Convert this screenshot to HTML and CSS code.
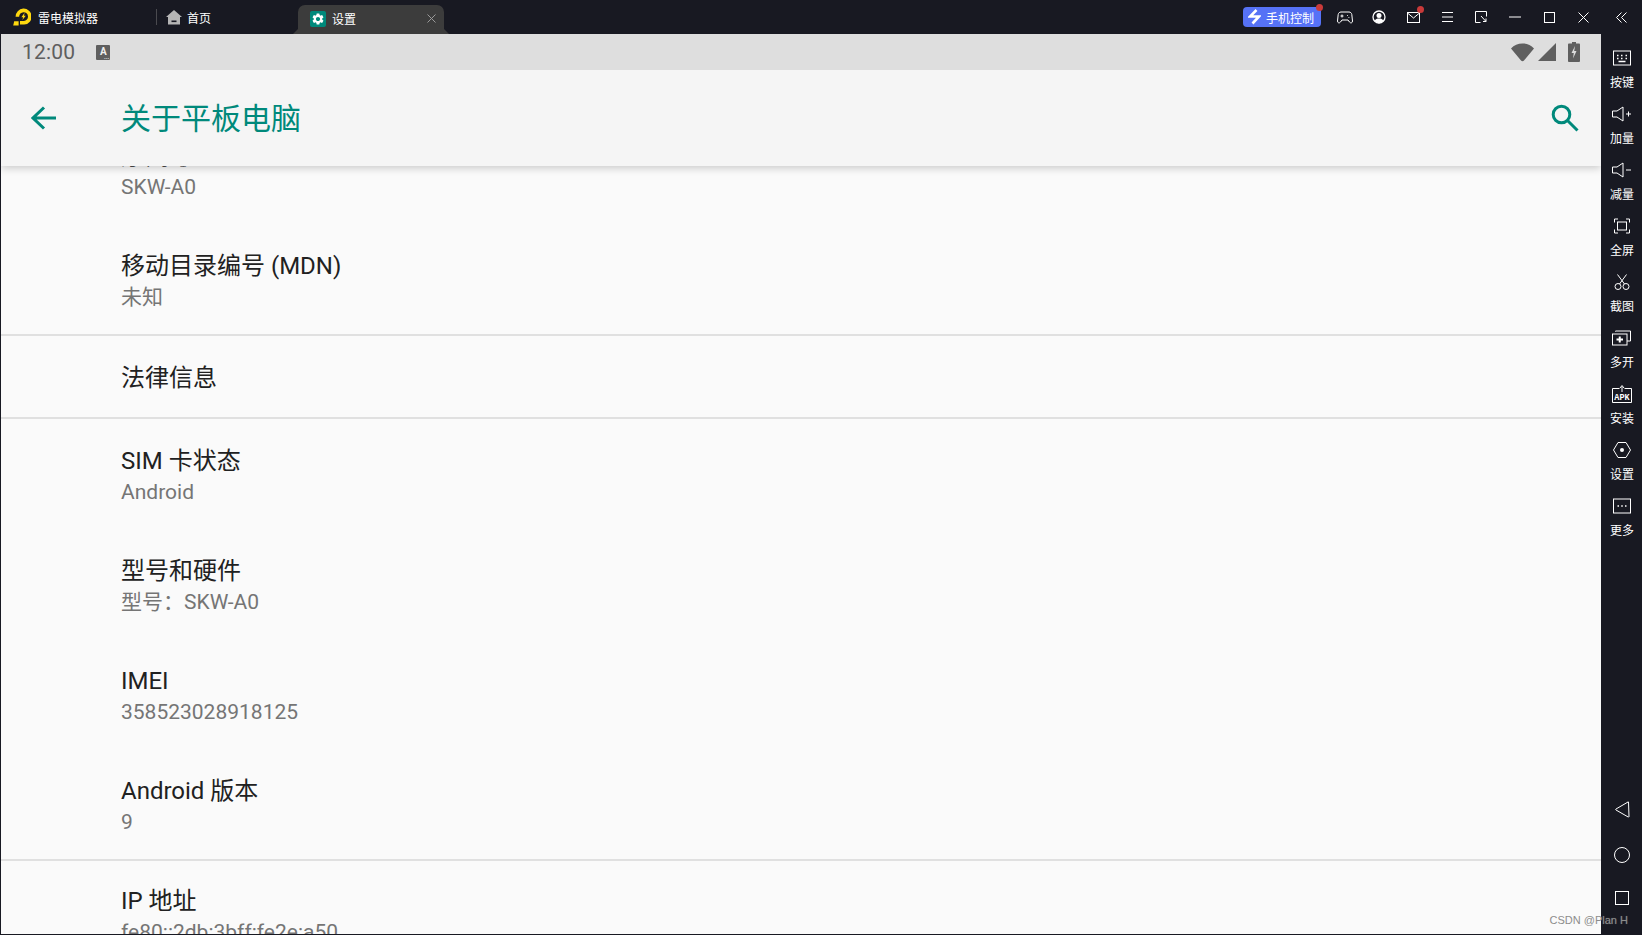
FILE: index.html
```html
<!DOCTYPE html>
<html lang="zh-CN">
<head>
    <meta charset="UTF-8">
    <title>雷电模拟器</title>
    <link rel="stylesheet" href="styles.css">
</head>
<body>

    <div class="titlebar">
        <div class="brand">
            <svg class="logo" width="18" height="18" viewBox="0 0 18 18">
                <path d="M7 14.8H11A6.2 6.2 0 1 0 4.4 8.800" fill="none" stroke="#ffd90f" stroke-width="3.6"/>
                <path d="M1.200 13.300H5.600V17.500H0.200Z" fill="#ffd90f"/>
                <path d="M11.600 4.800L8.400 9.300H10.200L9.400 12L12.800 7.800H11Z" fill="#ffd90f"/>
            </svg>
            <span>雷电模拟器</span>
        </div>
        <div class="home-tab">
            <svg width="16" height="15" viewBox="0 0 16 15">
                <path d="M8 0L16 7H14V14.500H2V7H0Z" fill="#b5b5b5"/>
                <rect x="5.500" y="10.500" width="5" height="1.600" fill="#181922"/>
            </svg>
            <span>首页</span>
        </div>
        <div class="tab">
            <span class="tab-icon">
                <svg width="14" height="14" viewBox="0 0 24 24">
                    <path d="M19.14 12.94c.04-.3.06-.61.06-.94 0-.32-.02-.64-.07-.94l2.03-1.58a.49.49 0 0 0 .12-.61l-1.92-3.32a.488.488 0 0 0-.59-.22l-2.39.96c-.5-.38-1.03-.7-1.62-.94l-.36-2.54a.484.484 0 0 0-.48-.41h-3.84c-.24 0-.43.17-.47.41l-.36 2.54c-.59.24-1.13.57-1.62.94l-2.39-.96c-.22-.08-.47 0-.59.22L2.74 8.87c-.12.21-.08.47.12.61l2.03 1.58c-.05.3-.09.63-.09.94s.02.64.07.94l-2.03 1.58a.49.49 0 0 0-.12.61l1.92 3.32c.12.22.37.29.59.22l2.39-.96c.5.38 1.03.7 1.62.94l.36 2.54c.05.24.24.41.48.41h3.84c.24 0 .44-.17.47-.41l.36-2.54c.59-.24 1.13-.56 1.62-.94l2.39.96c.22.08.47 0 .59-.22l1.92-3.32c.12-.22.07-.47-.12-.61l-2.01-1.58zM12 15.600c-1.980 0-3.600-1.620-3.600-3.600s1.620-3.600 3.600-3.600 3.600 1.620 3.600 3.600-1.620 3.600-3.600 3.600z" fill="#fff"/>
                </svg>
            </span>
            <span class="tab-name">设置</span>
            <svg class="tab-close" width="9" height="9" viewBox="0 0 9 9">
                <path d="M0.500 0.500L8.500 8.500M8.500 0.500L0.500 8.500" stroke="#9a9a9a" stroke-width="1" fill="none"/>
            </svg>
        </div>

        <div class="tools">
            <div class="phone-btn">
                <svg width="13" height="16" viewBox="0 0 13 16">
                    <path d="M8.500 1L2 7.500H11L4.500 14.500" fill="none" stroke="#fff" stroke-width="2.600"/>
                </svg>
                <span>手机控制</span>
                <i class="dot dot-btn"></i>
            </div>
            <div class="tool">
                <svg width="16" height="13" viewBox="0 0 16 13" class="line">
                    <path d="M4 1H12C13.500 1 14.500 2 14.800 3.500L15.500 10C15.600 12 13.500 12.500 12.500 11L11 9H5L3.500 11C2.500 12.500 0.400 12 0.500 10L1.200 3.500C1.500 2 2.500 1 4 1Z"/>
                    <path d="M3.500 5H6.500M5 3.500V6.500M10 4.500H10.800M11.500 6.500H12.300"/>
                </svg>
            </div>
            <div class="tool">
                <svg width="14" height="14" viewBox="0 0 14 14">
                    <circle cx="7" cy="7" r="6" fill="none" stroke="#fff" stroke-width="1.300"/>
                    <circle cx="7" cy="5.500" r="2.500" fill="#fff"/>
                    <path d="M2.500 11C3.500 9 5 8.500 7 8.500S10.500 9 11.500 11L7 13.500Z" fill="#fff"/>
                </svg>
            </div>
            <div class="tool">
                <svg width="13" height="11" viewBox="0 0 13 11" class="line">
                    <rect x="0.500" y="0.500" width="12" height="10"/>
                    <path d="M0.500 1L6.500 6L12.500 1"/>
                </svg>
                <i class="dot dot-mail"></i>
            </div>
            <div class="tool">
                <svg width="11" height="10" viewBox="0 0 11 10" class="line">
                    <path d="M0 0.500H11M0 5H11M0 9.500H11"/>
                </svg>
            </div>
            <div class="tool">
                <svg width="12" height="12" viewBox="0 0 12 12" class="line">
                    <path d="M5.500 11.500H0.500V0.500H11.500V5.500"/>
                    <path d="M6 5L11 10.500M11 7.500V10.500H8"/>
                </svg>
            </div>
            <div class="tool">
                <svg width="12" height="2" viewBox="0 0 12 2" class="line"><path d="M0 1H12"/></svg>
            </div>
            <div class="tool">
                <svg width="11" height="11" viewBox="0 0 11 11" class="line"><rect x="0.500" y="0.500" width="10" height="10"/></svg>
            </div>
            <div class="tool">
                <svg width="11" height="11" viewBox="0 0 11 11" class="line"><path d="M0.500 0.500L10.500 10.500M10.500 0.500L0.500 10.500"/></svg>
            </div>
            <div class="tool collapse">
                <svg width="11" height="11" viewBox="0 0 11 11" class="line"><path d="M5.500 0.500L0.500 5.500L5.500 10.500M10.500 0.500L5.500 5.500L10.500 10.500"/></svg>
            </div>
        </div>
    </div>

    <div class="main">
        <div class="tablet">
            <div class="statusbar">
                <span class="clock">12:00</span>
                <span class="kbd-badge">A<i>...</i></span>
                <div class="status-icons">
                    <svg width="23" height="19" viewBox="0 0 23 19"><path d="M0 5.500C3 2 7 0.500 11.500 0.500S20 2 23 5.500L13 17.500C12.200 18.500 10.800 18.500 10 17.500Z" fill="#5f5f5f"/></svg>
                    <svg width="18" height="18" viewBox="0 0 18 18"><path d="M18 0V18H0Z" fill="#5f5f5f"/></svg>
                    <svg class="battery" width="12" height="20" viewBox="0 0 12 20">
                        <path d="M4 0H8V1.500H11C11.500 1.500 12 2 12 2.500V19C12 19.500 11.500 20 11 20H1C0.500 20 0 19.500 0 19V2.500C0 2 0.500 1.500 1 1.500H4Z" fill="#5f5f5f"/>
                        <path d="M7 4L3.500 11H5.800L5 16.500L8.500 9H6.200Z" fill="#dedede"/>
                    </svg>
                </div>
            </div>

            <div class="appbar">
                <svg class="back" width="26" height="24" viewBox="0 0 26 24">
                    <path d="M25 12H2M13 1.500L2 12L13 22.500" fill="none" stroke="#00897b" stroke-width="3"/>
                </svg>
                <h1>关于平板电脑</h1>
                <svg class="search" width="28" height="28" viewBox="0 0 28 28">
                    <circle cx="10.500" cy="10.500" r="8.300" fill="none" stroke="#00897b" stroke-width="3"/>
                    <path d="M16.500 16.500L26.500 26.500" stroke="#00897b" stroke-width="3" fill="none"/>
                </svg>
            </div>

            <div class="list">
                <div class="row">
                    <div class="row-title">序列号</div>
                    <div class="row-sub">SKW-A0</div>
                </div>
                <div class="row">
                    <div class="row-title">移动目录编号 (MDN)</div>
                    <div class="row-sub">未知</div>
                </div>
                <div class="divider"></div>
                <div class="row row-single">
                    <div class="row-title">法律信息</div>
                </div>
                <div class="divider"></div>
                <div class="row">
                    <div class="row-title">SIM 卡状态</div>
                    <div class="row-sub">Android</div>
                </div>
                <div class="row">
                    <div class="row-title">型号和硬件</div>
                    <div class="row-sub">型号：SKW-A0</div>
                </div>
                <div class="row">
                    <div class="row-title">IMEI</div>
                    <div class="row-sub">358523028918125</div>
                </div>
                <div class="row">
                    <div class="row-title">Android 版本</div>
                    <div class="row-sub">9</div>
                </div>
                <div class="divider"></div>
                <div class="row row-last">
                    <div class="row-title">IP 地址</div>
                    <div class="row-sub">fe80::2db:3bff:fe2e:a50</div>
                </div>
            </div>
        </div>

        <div class="sidebar">
            <div class="side-item">
                <svg width="18" height="15" viewBox="0 0 18 15" class="line">
                    <rect x="0.500" y="0.500" width="17" height="14"/>
                    <path d="M4 5H5.500M8 5H9.500M12.500 5H14M4 8H5.500M8 8H9.500M12.500 8H14M5.500 11H12.500" stroke-width="1.500"/>
                </svg>
                <span>按键</span>
            </div>
            <div class="side-item">
                <svg width="19" height="15" viewBox="0 0 19 15" class="line">
                    <path d="M0.500 4.500H5L11 0.500V14.500L5 10.500H0.500Z"/>
                    <path d="M14 7.500H19M16.500 5V10"/>
                </svg>
                <span>加量</span>
            </div>
            <div class="side-item">
                <svg width="19" height="15" viewBox="0 0 19 15" class="line">
                    <path d="M0.500 4.500H5L11 0.500V14.500L5 10.500H0.500Z"/>
                    <path d="M14 7.500H19"/>
                </svg>
                <span>减量</span>
            </div>
            <div class="side-item">
                <svg width="16" height="15" viewBox="0 0 16 15" class="line">
                    <path d="M0.500 4V0.500H4M12 0.500H15.500V4M15.500 11V14.500H12M4 14.500H0.500V11"/>
                    <rect x="3.500" y="3.500" width="9" height="8"/>
                </svg>
                <span>全屏</span>
            </div>
            <div class="side-item">
                <svg width="16" height="16" viewBox="0 0 16 16" class="line">
                    <circle cx="4" cy="12.500" r="3"/>
                    <circle cx="12" cy="12.500" r="3"/>
                    <path d="M5.500 10L12.500 0.500M10.500 10L3.500 0.500"/>
                </svg>
                <span>截图</span>
            </div>
            <div class="side-item">
                <svg width="19" height="15" viewBox="0 0 19 15" class="line">
                    <rect x="0.500" y="3.500" width="14.500" height="11"/>
                    <path d="M3.500 1V0.500H18.500V10.500H15"/>
                    <path d="M4.500 9H11M7.750 6V12" stroke-width="2"/>
                </svg>
                <span>多开</span>
            </div>
            <div class="side-item">
                <svg width="20" height="18" viewBox="0 0 20 18" class="line">
                    <path d="M7.500 3.500H0.500V17.500H19.500V3.500H12.500"/>
                    <path d="M10 7V1.500M8 3L10 0.500L12 3"/>
                    <text x="10" y="15" class="apk">APK</text>
                </svg>
                <span>安装</span>
            </div>
            <div class="side-item">
                <svg width="18" height="16" viewBox="0 0 18 16" class="line">
                    <path d="M5 0.500H13L17.500 8L13 15.500H5L0.500 8Z"/>
                    <circle cx="9" cy="8" r="2" fill="#fff" stroke="none"/>
                </svg>
                <span>设置</span>
            </div>
            <div class="side-item">
                <svg width="18" height="15" viewBox="0 0 18 15" class="line">
                    <rect x="0.500" y="0.500" width="17" height="14"/>
                    <path d="M4.500 7.500H6M8.250 7.500H9.750M12 7.500H13.500" stroke-width="1.500"/>
                </svg>
                <span>更多</span>
            </div>

            <div class="nav">
                <svg width="15" height="17" viewBox="0 0 15 17" class="line">
                    <path d="M13.500 1L14 15.500C14 16 13.500 16.200 13 15.900L1 9C0.500 8.700 0.500 8.300 1 8L13 1C13.300 0.800 13.500 0.800 13.500 1Z"/>
                </svg>
                <svg width="16" height="16" viewBox="0 0 16 16" class="line"><circle cx="8" cy="8" r="7.500"/></svg>
                <svg width="14" height="14" viewBox="0 0 14 14" class="line"><rect x="0.500" y="0.500" width="13" height="13"/></svg>
            </div>
        </div>

        <div class="watermark">CSDN @Plan H</div>
    </div>

</body>
</html>
```

FILE: styles.css
```css
html, body {
    margin: 0;
    height: 100%;
}

body {
    width: 1642px;
    height: 935px;
    overflow: hidden;
    background: #181922;
    font-family: Roboto, "Noto Sans CJK SC", sans-serif;
    display: flex;
    flex-direction: column;
}

.line {
    fill: none;
    stroke: #fff;
    stroke-width: 1;
}

/* title bar */
.titlebar {
    height: 34px;
    flex: none;
    display: flex;
    align-items: center;
    color: #fff;
    font-size: 12px;
    font-family: "Noto Sans CJK SC", sans-serif;
}

.brand {
    width: 156px;
    padding-left: 13px;
    box-sizing: border-box;
    display: flex;
    align-items: center;
    gap: 7px;
}

.logo {
    flex: none;
}

.home-tab {
    width: 137px;
    box-sizing: border-box;
    border-left: 1px solid #4a4a4f;
    height: 16px;
    padding-left: 9px;
    display: flex;
    align-items: center;
    gap: 5px;
}

.tab {
    position: relative;
    align-self: flex-end;
    width: 146px;
    height: 29px;
    margin-left: 5px;
    box-sizing: border-box;
    padding: 0 0 2px 12px;
    background: #3c3c3c;
    border-radius: 7px 7px 0 0;
    display: flex;
    align-items: center;
    gap: 6px;
}

.tab::before, .tab::after {
    content: "";
    position: absolute;
    bottom: 0;
    width: 5px;
    height: 5px;
    background: #3c3c3c;
}

.tab::before {
    left: -5px;
    clip-path: polygon(0 100%, 100% 0, 100% 100%);
}

.tab::after {
    right: -5px;
    clip-path: polygon(0 0, 100% 100%, 0 100%);
}

.tab-icon {
    width: 16px;
    height: 16px;
    background: #00897b;
    border-radius: 2px;
    display: flex;
    align-items: center;
    justify-content: center;
}

.tab-name {
    flex: 1;
}

.tab-close {
    margin-right: 8px;
}

.tools {
    margin-left: auto;
    display: flex;
    align-items: center;
}

.phone-btn {
    position: relative;
    width: 78px;
    height: 20px;
    margin-right: 7px;
    box-sizing: border-box;
    padding-left: 5px;
    background: #5672f6;
    border-radius: 4px;
    display: flex;
    align-items: center;
    gap: 5px;
}

.dot {
    position: absolute;
    width: 7px;
    height: 7px;
    border-radius: 50%;
    background: #c93a3a;
}

.dot-btn {
    top: -3px;
    right: -2px;
}

.dot-mail {
    top: 6px;
    right: 6px;
}

.tool {
    position: relative;
    width: 34px;
    height: 34px;
    display: flex;
    align-items: center;
    justify-content: center;
}

.collapse {
    width: 42px;
    padding-left: 1px;
    box-sizing: border-box;
}

/* emulated screen */
.main {
    position: relative;
    flex: 1;
    min-height: 0;
    display: flex;
    border-left: 1px solid #181922;
    border-bottom: 1px solid #181922;
}

.tablet {
    flex: 1;
    min-width: 0;
    background: #fafafa;
    overflow: hidden;
    display: flex;
    flex-direction: column;
}

.statusbar {
    position: relative;
    z-index: 2;
    height: 36px;
    flex: none;
    background: #dedede;
    display: flex;
    align-items: center;
    padding: 0 21px 0 21px;
    color: #5f5f5f;
}

.clock {
    font-size: 21px;
    letter-spacing: 0.2px;
}

.kbd-badge {
    position: relative;
    width: 14px;
    height: 15px;
    margin-left: 21px;
    background: #5f5f5f;
    border-radius: 1px;
    color: #eee;
    font-size: 10px;
    font-weight: 700;
    line-height: 13px;
    text-align: center;
}

.kbd-badge i {
    position: absolute;
    right: 1px;
    bottom: 1px;
    font-size: 6px;
    line-height: 5px;
    font-style: normal;
}

.status-icons {
    margin-left: auto;
    display: flex;
    align-items: center;
    gap: 4px;
}

.battery {
    margin-left: 8px;
}

.appbar {
    position: relative;
    z-index: 1;
    height: 96px;
    flex: none;
    box-sizing: border-box;
    padding: 0 22px 0 30px;
    background: #f5f5f5;
    box-shadow: 0 2px 8px rgba(0, 0, 0, 0.2);
    display: flex;
    align-items: center;
}

.back {
    margin-top: 2px;
    margin-bottom: 2px;
}

.appbar h1 {
    margin: 0 0 4px 64px;
    font-size: 30px;
    font-weight: 400;
    color: #00897b;
}

.search {
    margin-left: auto;
}

/* the list is scrolled, so its first row sits under the app bar */
.list {
    margin-top: -52px;
}

.row {
    height: 110px;
    box-sizing: border-box;
    padding: 26px 0 0 120px;
}

.row-single {
    height: 81px;
}

.row-last {
    padding-top: 24px;
}

.row-title {
    font-size: 24px;
    line-height: 32px;
    color: #212121;
}

.row-sub {
    margin-top: 1px;
    font-size: 21px;
    line-height: 28px;
    color: #757575;
}

.divider {
    height: 2px;
    background: #e0e0e0;
}

/* sidebar */
.sidebar {
    width: 41px;
    flex: none;
    box-sizing: border-box;
    display: flex;
    flex-direction: column;
    align-items: center;
    padding: 14px 0 0 1px;
    color: #fff;
    font-size: 12px;
    font-family: "Noto Sans CJK SC", sans-serif;
}

.side-item {
    height: 56px;
    flex: none;
    display: flex;
    flex-direction: column;
    align-items: center;
}

.side-item svg {
    height: 20px;
    margin-bottom: 5px;
}

.side-item span {
    line-height: 18px;
}

.apk {
    fill: #fff;
    stroke: none;
    font-family: "Liberation Mono", monospace;
    font-size: 8.5px;
    font-weight: 700;
    text-anchor: middle;
}

.nav {
    margin-top: auto;
    margin-bottom: 29px;
    height: 104px;
    display: flex;
    flex-direction: column;
    align-items: center;
    justify-content: space-between;
}

.watermark {
    position: absolute;
    right: 14px;
    bottom: 8px;
    font-family: "Liberation Sans", sans-serif;
    font-size: 11px;
    color: #8c8c8c;
    text-shadow: 0 0 1px rgba(255, 255, 255, 0.3);
}
```
